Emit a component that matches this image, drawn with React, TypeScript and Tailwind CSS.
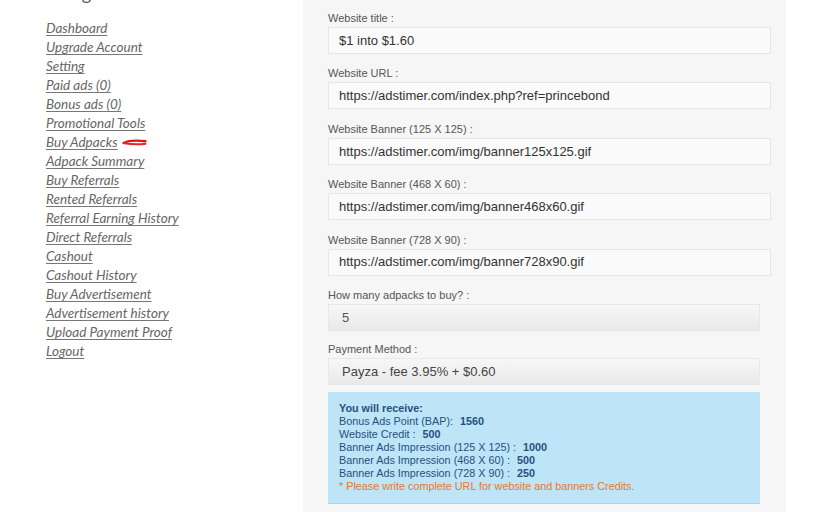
import React from 'react'

const links = [
  'Dashboard',
  'Upgrade Account',
  'Setting',
  'Paid ads (0)',
  'Bonus ads (0)',
  'Promotional Tools',
  'Buy Adpacks',
  'Adpack Summary',
  'Buy Referrals',
  'Rented Referrals',
  'Referral Earning History',
  'Direct Referrals',
  'Cashout',
  'Cashout History',
  'Buy Advertisement',
  'Advertisement history',
  'Upload Payment Proof',
  'Logout',
]

const textFields = [
  { label: 'Website title :', value: '$1 into $1.60' },
  { label: 'Website URL :', value: 'https://adstimer.com/index.php?ref=princebond' },
  { label: 'Website Banner (125 X 125) :', value: 'https://adstimer.com/img/banner125x125.gif' },
  { label: 'Website Banner (468 X 60) :', value: 'https://adstimer.com/img/banner468x60.gif' },
  { label: 'Website Banner (728 X 90) :', value: 'https://adstimer.com/img/banner728x90.gif' },
]

const receive = [
  { label: 'Bonus Ads Point (BAP):', value: '1560' },
  { label: 'Website Credit :', value: '500' },
  { label: 'Banner Ads Impression (125 X 125) :', value: '1000' },
  { label: 'Banner Ads Impression (468 X 60) :', value: '500' },
  { label: 'Banner Ads Impression (728 X 90) :', value: '250' },
]

// hand-drawn red swoosh next to "Buy Adpacks"
const RedMark = () => (
  <svg width="26" height="9" viewBox="0 0 26 9" className="ml-[4px]">
    <path d="M1.5 5 C6 2.6 14 2.2 23.5 3.2" stroke="#e01818" strokeWidth="2.4" fill="none" strokeLinecap="round" />
    <path d="M2.5 5.2 C9 6.4 17 6.6 23.5 5.8" stroke="#e42626" strokeWidth="2" fill="none" strokeLinecap="round" />
  </svg>
)

const App = () => {
  return (
    <div className="flex w-[822px] h-[512px] overflow-hidden bg-white">
      <div className="w-[303px] shrink-0 pl-[46px]">
        <h2 className="mt-[-16px] h-[18px] text-[18px] leading-[18px] text-[#555] font-['Lato',sans-serif]">
          Navigation
        </h2>
        <ul className="mt-[17px] font-['Lato',sans-serif] italic text-[13.5px] leading-[19px] text-[#666]">
          {links.map((link) => (
            <li key={link} className="flex items-center h-[19px]">
              <a href="#" className="underline underline-offset-2 decoration-[#777]">
                {link}
              </a>
              {link === 'Buy Adpacks' && <RedMark />}
            </li>
          ))}
        </ul>
      </div>

      <div className="w-[483px] shrink-0 bg-[#f6f6f6] pl-[25px] pr-[15px] pt-[11px] font-['Liberation_Sans',Arial,sans-serif]">
        {textFields.map((f) => (
          <div key={f.label} className="mb-[12.4px]">
            <label className="block text-[11px] leading-[14px] text-[#555] mb-[2px]">{f.label}</label>
            <div className="h-[27px] flex items-center bg-[#fafafa] border border-[#e6e6e6] px-[10px] text-[13px] text-[#333]">
              {f.value}
            </div>
          </div>
        ))}

        <div className="mb-[11px] w-[432px]">
          <label className="block text-[11px] leading-[14px] text-[#555] mb-[2px]">How many adpacks to buy? :</label>
          <div className="h-[27px] flex items-center bg-gradient-to-b from-[#f7f7f7] to-[#e9e9e9] border border-[#e8e8e8] px-[13px] text-[13px] text-[#555]">
            5
          </div>
        </div>

        <div className="mb-[7px] w-[432px]">
          <label className="block text-[11px] leading-[14px] text-[#555] mb-[2px]">Payment Method :</label>
          <div className="h-[27px] flex items-center bg-gradient-to-b from-[#f7f7f7] to-[#e9e9e9] border border-[#e8e8e8] px-[13px] text-[13px] text-[#444]">
            Payza - fee 3.95% + $0.60
          </div>
        </div>

        <div className="w-[432px] bg-[#bde4f7] border-b border-[#a9d4ea] pl-[11px] pt-[10px] pb-[10px] text-[10.8px] leading-[13px] text-[#24527d]">
          <div className="font-bold">You will receive:</div>
          {receive.map((r) => (
            <div key={r.label}>
              {r.label} <span className="font-bold ml-[4px]">{r.value}</span>
            </div>
          ))}
          <div className="text-[#e8782a]">* Please write complete URL for website and banners Credits.</div>
        </div>
      </div>

      <div className="flex-1 bg-white" />
    </div>
  )
}

export default App
